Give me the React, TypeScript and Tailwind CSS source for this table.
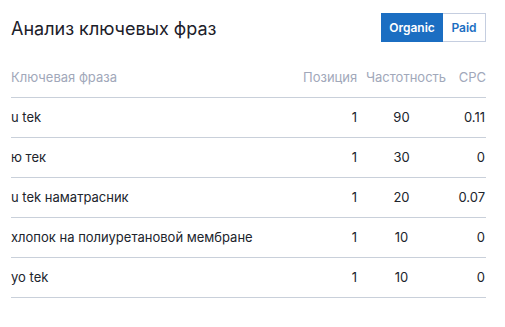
import React from "react";

const rows = [
  { k: "u tek", p: 1, f: 90, c: "0.11" },
  { k: "ю тек", p: 1, f: 30, c: "0" },
  { k: "u tek наматрасник", p: 1, f: 20, c: "0.07" },
  { k: "хлопок на полиуретановой мембране", p: 1, f: 10, c: "0" },
  { k: "yo tek", p: 1, f: 10, c: "0" },
];

export default function App() {
  return (
    <div
      className="w-[505px] h-[327px] bg-white pl-[11px] pr-[19px] pt-[13px] text-[#20242c]"
      style={{ fontFamily: "Inter, 'Noto Sans', sans-serif" }}
    >
      <div className="flex items-center justify-between h-[29px]">
        <h1 className="text-[18px] font-normal leading-none text-[#1c2029] pt-[2px]">Анализ ключевых фраз</h1>
        <div className="flex h-[29px] text-[12px] font-semibold">
          <button className="w-[62px] h-full bg-[#1b6ec2] text-white flex items-center justify-center">
            Organic
          </button>
          <button className="w-[43px] h-full border border-l-0 border-[#c5cee0] text-[#1b6ec2] flex items-center justify-center">
            Paid
          </button>
        </div>
      </div>
      <div className="mt-[16px] text-[13px]">
        <div className="grid grid-cols-[1fr_54px_98px_31px] h-[40px] items-center border-b border-[#c9d0da] text-[#a1a8ba]">
          <div>Ключевая фраза</div>
          <div className="text-right whitespace-nowrap">Позиция</div>
          <div className="text-center whitespace-nowrap">Частотность</div>
          <div className="text-right">CPC</div>
        </div>
        {rows.map((r, i) => (
          <div
            key={i}
            className="grid grid-cols-[1fr_54px_98px_31px] h-[40px] items-center border-b border-[#c9d0da]"
          >
            <div>{r.k}</div>
            <div className="text-right">{r.p}</div>
            <div className="text-center pr-[9px]">{r.f}</div>
            <div className="text-right pr-[1px]">{r.c}</div>
          </div>
        ))}
      </div>
    </div>
  );
}
